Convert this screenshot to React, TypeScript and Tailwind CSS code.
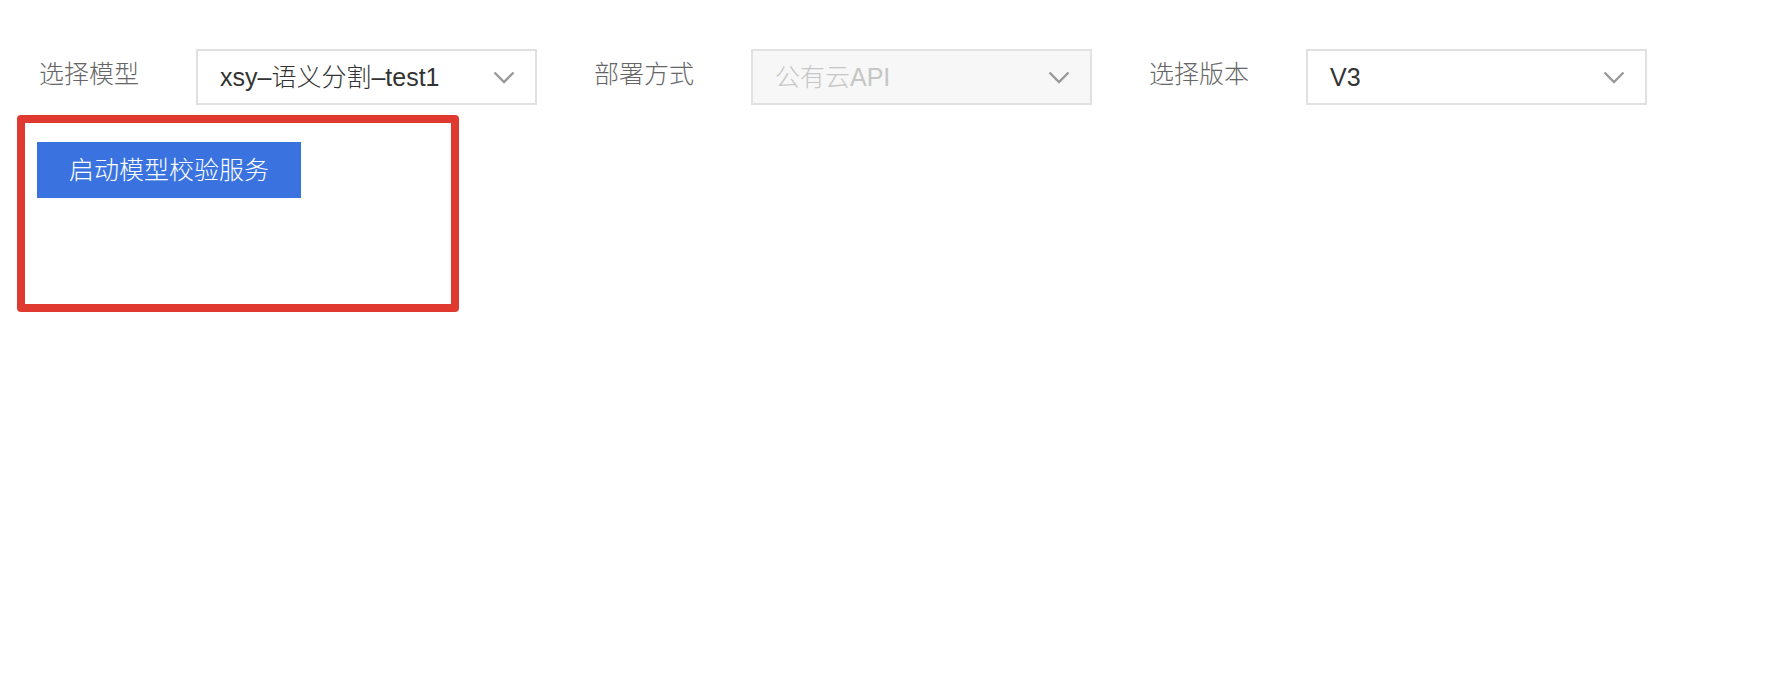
import React from "react";

const font = { fontFamily: '"Liberation Sans", "Noto Sans CJK SC", "Noto Sans", sans-serif' };

function Chevron({ color = "#999999" }: { color?: string }) {
  return (
    <svg width="22" height="13" viewBox="0 0 22 13" fill="none">
      <polyline points="1.5,1.5 11,11 20.5,1.5" stroke={color} strokeWidth="2.4" fill="none" />
    </svg>
  );
}

function Field({
  label,
  value,
  disabled,
  last,
}: {
  label: string;
  value: string;
  disabled?: boolean;
  last?: boolean;
}) {
  return (
    <div className={`flex items-center ${last ? "" : "mr-[57px]"}`}>
      <div className="w-[157px] text-[25px] font-light leading-none text-[#666666] -mt-[6px]">{label}</div>
      <div
        className={`w-[341px] h-[56px] flex items-center justify-between pl-[22px] pr-[20px] border-2 ${
          disabled ? "bg-[#f7f7f7] border-[#e2e2e2]" : "bg-white border-[#e0e0e0]"
        }`}
      >
        <span className={`text-[25px] font-light leading-none ${disabled ? "text-[#c6c6c6]" : "text-[#333333]"}`}>{value}</span>
        <Chevron />
      </div>
    </div>
  );
}

export default function App() {
  return (
    <div className="w-[1786px] h-[686px] bg-white" style={font}>
      <div className="flex items-center pt-[49px] pl-[39px]">
        <Field label="选择模型" value="xsy–语义分割–test1" />
        <Field label="部署方式" value="公有云API" disabled />
        <Field label="选择版本" value="V3" last />
      </div>
      <div className="ml-[17px] mt-[10px] w-[442px] h-[197px] border-[8px] border-[#e03a30] rounded-[4px] pl-[12px] pt-[19px]">
        <button className="w-[264px] h-[56px] bg-[#3a73df] text-white text-[25px] font-light leading-none flex items-center justify-center">
          启动模型校验服务
        </button>
      </div>
    </div>
  );
}
